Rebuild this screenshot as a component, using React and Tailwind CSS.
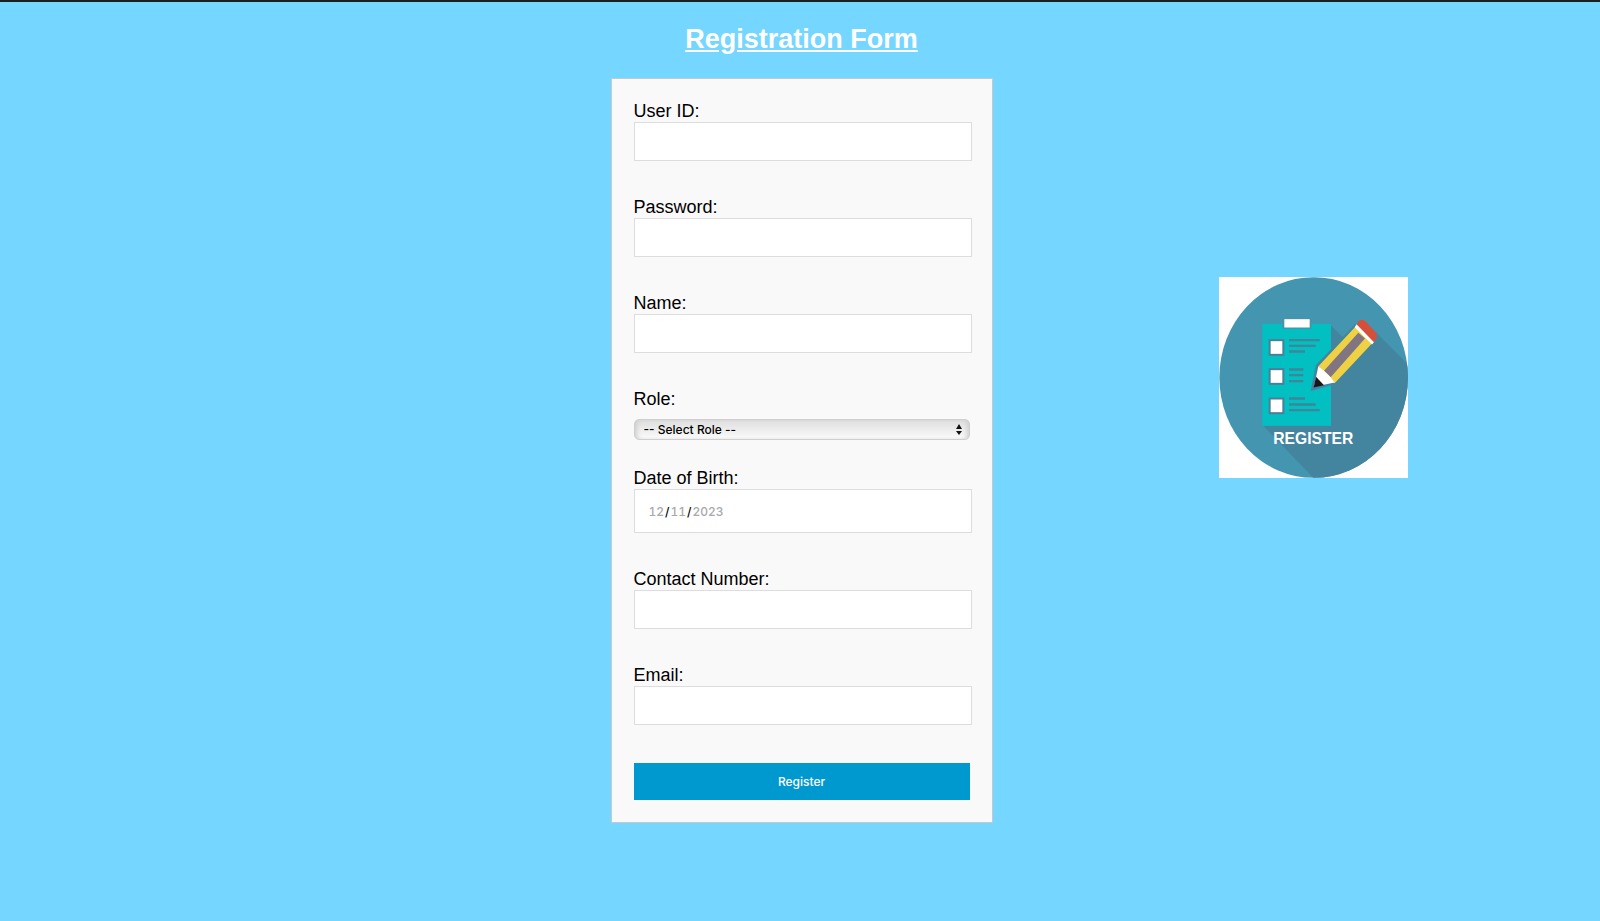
import React from "react";

const inputClass =
  "block h-[39px] w-[calc(100%+2px)] rounded-none border border-[#dddddd] bg-white px-3.5 font-['Inter',sans-serif] text-[13px] text-black outline-none";

function Field({ id, label, children }) {
  return (
    <div>
      <label htmlFor={id} className="block text-[18px] leading-[21px] text-black">
        {label}
      </label>
      {children}
    </div>
  );
}

function TextField({ id, label, type = "text" }) {
  return (
    <Field id={id} label={label}>
      <input id={id} name={id} type={type} className={inputClass} />
    </Field>
  );
}

function RegisterBadge() {
  return (
    <svg
      viewBox="28 23 567 602"
      className="h-[201px] w-[189px] bg-white"
      role="img"
      aria-label="Register"
    >
      <defs>
        <clipPath id="disc">
          <ellipse cx="312" cy="324" rx="283" ry="301" />
        </clipPath>
      </defs>
      <ellipse cx="312" cy="324" rx="283" ry="301" fill="#4495af" />
      <g clipPath="url(#disc)" fill="#43849f">
        <path d="M364 168 L418 222 L500 190 L640 330 L640 660 L345 660 L160 468 L364 468 Z" />
      </g>
      <rect x="158" y="163" width="206" height="306" fill="#02bfc1" />
      <rect x="218" y="146" width="87" height="32" fill="#4b91a8" />
      <rect x="224" y="149" width="76" height="25" fill="#fff" />
      <g fill="#fff" stroke="#4a7f99" strokeWidth="6">
        <rect x="180" y="212" width="41" height="44" />
        <rect x="180" y="299" width="41" height="44" />
        <rect x="180" y="387" width="41" height="44" />
      </g>
      <path
        d="M238 212H330M238 229H318M238 246H286M238 300H281M238 317H281M238 335H281M238 387H286M238 405H318M238 422H330"
        stroke="#3d8799"
        strokeWidth="7"
      />
      <path d="M437 168 L321 289 L307 360 L376 341 L488 222 Z" fill="#43849f" stroke="#43849f" strokeWidth="6" />
      <path d="M437 172 L326 290 L375 341 L487 222 Z" fill="#efd144" />
      <path d="M446 190 L343 304 L363 323 L466 207 Z" fill="#817581" />
      <path d="M326 290 L313 352 L375 339 L363 323 L343 304 Z" fill="#fff" />
      <path d="M319 322 L312 354 L343 347 Z" fill="#17171c" />
      <path d="M441 164 L494 217 L487 225 L435 173 Z" fill="#fff" />
      <path d="M441 164 L448 154 Q458 147 468 156 L498 188 Q505 197 500 207 L493 218 Z" fill="#d65039" />
      <text
        x="311"
        y="524"
        textAnchor="middle"
        fontSize="47"
        fontWeight="700"
        fill="#fff"
        fontFamily="'Liberation Sans', Arial, sans-serif"
      >
        REGISTER
      </text>
    </svg>
  );
}

export default function App() {
  return (
    <div className="min-h-screen border-t-2 border-[#1c1f20] bg-[#75d6ff] pl-[3px] font-['Liberation_Sans',Arial,sans-serif]">
      <h1 className="pt-[19px] text-center text-[27px] leading-9 font-bold text-white underline">
        Registration Form
      </h1>
      <main className="mt-[21px] grid grid-cols-[1fr_382px_1fr] items-start pb-8">
        <form
          className="col-start-2 flex flex-col gap-9 border border-[#c3c9cd] bg-[#f9f9f9] p-[22px]"
          onSubmit={(e) => e.preventDefault()}
        >
          <TextField id="userid" label="User ID:" />
          <TextField id="password" label="Password:" type="password" />
          <TextField id="name" label="Name:" />
          <div className="-mb-2">
            <Field id="role" label="Role:">
              <div className="relative mt-[9px]">
                <select
                  id="role"
                  name="role"
                  defaultValue=""
                  className="block h-[21px] w-full appearance-none rounded-[5px] border border-[#cfcfcf] bg-linear-to-b from-[#dedede] to-[#fbfbfb] px-[9px] font-['Inter',sans-serif] text-[12px] leading-[19px] font-medium text-black shadow-[inset_4px_0_4px_-2px_#cfcfcf,inset_-4px_0_4px_-2px_#cfcfcf] outline-none"
                >
                  <option value="">-- Select Role --</option>
                </select>
                <svg
                  viewBox="0 0 6 12"
                  className="pointer-events-none absolute top-[5px] right-2 h-3 w-1.5"
                  aria-hidden="true"
                >
                  <path d="M3 0 L6 5 H0 Z M3 11 L6 7 H0 Z" fill="#111" />
                </svg>
              </div>
            </Field>
          </div>
          <Field id="dob" label="Date of Birth:">
            <input
              id="dob"
              name="dob"
              type="date"
              defaultValue="2023-12-11"
              className="block h-11 w-[calc(100%+2px)] rounded-none border border-[#dddddd] bg-white px-[13px] pt-0.5 font-['Inter',sans-serif] text-[12px] font-medium text-black tabular-nums outline-none [&::-webkit-calendar-picker-indicator]:hidden [&::-webkit-datetime-edit-day-field]:text-[#a9a9a9] [&::-webkit-datetime-edit-month-field]:text-[#a9a9a9] [&::-webkit-datetime-edit-year-field]:text-[#a9a9a9]"
            />
          </Field>
          <TextField id="contact" label="Contact Number:" type="tel" />
          <TextField id="email" label="Email:" type="email" />
          <button
            type="submit"
            className="mt-0.5 h-[37px] w-full bg-[#0099cf] font-['Inter',sans-serif] text-[12px] font-medium text-white"
          >
            Register
          </button>
        </form>
        <div className="mt-[199px] flex justify-end pr-48">
          <RegisterBadge />
        </div>
      </main>
    </div>
  );
}
